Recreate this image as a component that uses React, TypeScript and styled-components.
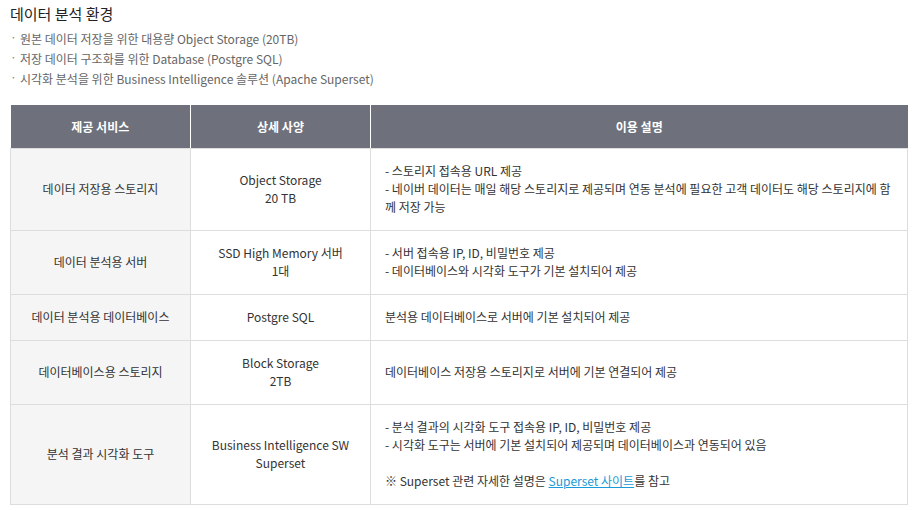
import React, {FC} from 'react';
import styled, {createGlobalStyle} from 'styled-components';

const GlobalStyle = createGlobalStyle`
  body {
    margin: 0;
    background: #fff;
    font-family: 'Noto Sans CJK KR', 'Noto Sans', sans-serif;
    color: #333;
  }
`;

const Page = styled.div`
  padding: 4px 6px 6px 10px;
  width: 914px;
  box-sizing: border-box;
`;

const Title = styled.h3`
  margin: 0;
  font-size: 15px;
  line-height: 20px;
  font-weight: 400;
  color: #222;
`;

const Bullets = styled.ul`
  list-style: none;
  margin: 5px 0 16px;
  padding: 0;
`;

const Bullet = styled.li`
  position: relative;
  padding-left: 10px;
  font-size: 12px;
  line-height: 20px;
  color: #666;

  &::before {
    content: '·';
    position: absolute;
    left: 0;
    top: -2px;
    color: #888;
  }
`;

const Table = styled.table`
  width: 898px;
  border-collapse: collapse;
  table-layout: fixed;
  font-size: 12px;
  line-height: 18px;
`;

const HCell = styled.th`
  height: 43px;
  padding: 0;
  background: #6e717c;
  color: #fff;
  font-weight: 700;
  font-size: 12px;
  text-align: center;
  border-left: 1px solid #fff;
  border-bottom: 1px solid #ddd;

  &:first-child {
    border-left: 0;
  }
`;

const Cell = styled.td`
  padding: 13px 14px 14px;
  border: 1px solid #ddd;
  color: #333;
  vertical-align: middle;
`;

const NameCell = styled(Cell)`
  background: #f5f5f5;
  text-align: center;
`;

const SpecCell = styled(Cell)`
  text-align: center;
`;

const UsageCell = styled(Cell)`
  padding-right: 8px;
  text-align: left;
`;

const Line = styled.div<{$lines?: number}>`
  height: ${({$lines = 1}) => $lines * 18}px;
`;

const Link = styled.a`
  color: #1a9ad6;
  text-decoration: underline;
`;

interface Row {
  service: string;
  spec: string[];
  usage: React.ReactNode;
}

const rows: Row[] = [
  {
    service: '데이터 저장용 스토리지',
    spec: ['Object Storage', '20 TB'],
    usage: (
      <>
        <Line>- 스토리지 접속용 URL 제공</Line>
        <Line $lines={2}>
          - 네이버 데이터는 매일 해당 스토리지로 제공되며 연동 분석에 필요한 고객 데이터도 해당 스토리지에 함께 저장 가능
        </Line>
      </>
    ),
  },
  {
    service: '데이터 분석용 서버',
    spec: ['SSD High Memory 서버', '1대'],
    usage: (
      <>
        <Line>- 서버 접속용 IP, ID, 비밀번호 제공</Line>
        <Line>- 데이터베이스와 시각화 도구가 기본 설치되어 제공</Line>
      </>
    ),
  },
  {
    service: '데이터 분석용 데이터베이스',
    spec: ['Postgre SQL'],
    usage: <Line>분석용 데이터베이스로 서버에 기본 설치되어 제공</Line>,
  },
  {
    service: '데이터베이스용 스토리지',
    spec: ['Block Storage', '2TB'],
    usage: <Line>데이터베이스 저장용 스토리지로 서버에 기본 연결되어 제공</Line>,
  },
  {
    service: '분석 결과 시각화 도구',
    spec: ['Business Intelligence SW', 'Superset'],
    usage: (
      <>
        <Line>- 분석 결과의 시각화 도구 접속용 IP, ID, 비밀번호 제공</Line>
        <Line>- 시각화 도구는 서버에 기본 설치되어 제공되며 데이터베이스과 연동되어 있음</Line>
        <Line />
        <Line>
          ※ Superset 관련 자세한 설명은 <Link href="#">Superset 사이트</Link>를 참고
        </Line>
      </>
    ),
  },
];

const headers = ['제공 서비스', '상세 사양', '이용 설명'];

const App: FC = () => (
  <Page>
    <GlobalStyle />
    <Title>데이터 분석 환경</Title>
    <Bullets>
      <Bullet>원본 데이터 저장을 위한 대용량 Object Storage (20TB)</Bullet>
      <Bullet>저장 데이터 구조화를 위한 Database (Postgre SQL)</Bullet>
      <Bullet>시각화 분석을 위한 Business Intelligence 솔루션 (Apache Superset)</Bullet>
    </Bullets>
    <Table>
      <colgroup>
        <col style={{width: 180}} />
        <col style={{width: 180}} />
        <col />
      </colgroup>
      <thead>
        <tr>
          {headers.map((h) => (
            <HCell key={h}>{h}</HCell>
          ))}
        </tr>
      </thead>
      <tbody>
        {rows.map(({service, spec, usage}) => (
          <tr key={service}>
            <NameCell>{service}</NameCell>
            <SpecCell>
              {spec.map((s) => (
                <Line key={s}>{s}</Line>
              ))}
            </SpecCell>
            <UsageCell>{usage}</UsageCell>
          </tr>
        ))}
      </tbody>
    </Table>
  </Page>
);

export default App;
